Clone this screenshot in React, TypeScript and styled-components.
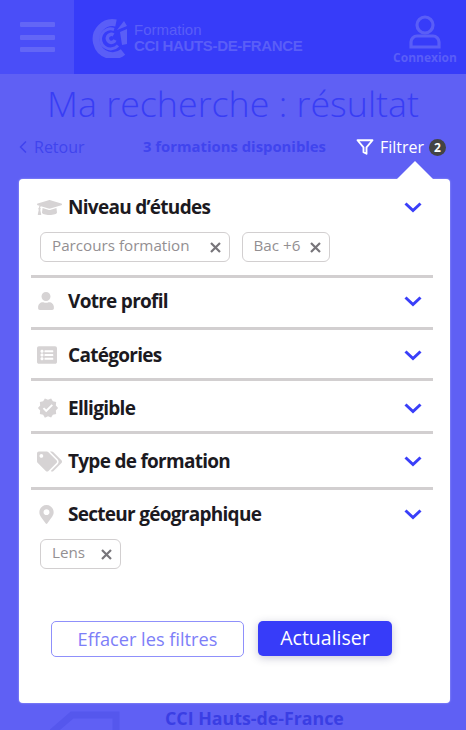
import React from 'react'
import styled, { createGlobalStyle } from 'styled-components'
import { FaGraduationCap, FaUser, FaListAlt, FaTags, FaMapMarkerAlt } from 'react-icons/fa'
import { MdVerified } from 'react-icons/md'
import { FiFilter, FiChevronLeft } from 'react-icons/fi'

const GlobalStyle = createGlobalStyle`
  html, body { margin: 0; padding: 0; }
  body { font-family: "Open Sans", "Noto Sans", sans-serif; background: #5f60f4; }
`

const Page = styled.div`
  position: relative;
  width: 466px;
  height: 730px;
  overflow: hidden;
  background: #5f60f4;
`

const Header = styled.header`
  display: flex;
  height: 74px;
  background: #373cf9;
`

const MenuButton = styled.div`
  width: 74px;
  display: flex;
  flex-direction: column;
  justify-content: center;
  align-items: center;
  gap: 7.5px;
  background: #4a4ef8;
`

const MenuLine = styled.span`
  width: 35px;
  height: 5px;
  border-radius: 1px;
  background: #6366f6;
`

const Brand = styled.div`
  display: flex;
  align-items: center;
  gap: 6px;
  padding: 2px 0 0 17px;
  flex: 1;
`

const BrandText = styled.div`
  display: flex;
  flex-direction: column;
  color: #5a5ef7;
  font-family: "Liberation Sans", sans-serif;
`

const BrandTop = styled.span`
  font-size: 15px;
  line-height: 15px;
  font-weight: 400;
`

const BrandBottom = styled.span`
  font-size: 15px;
  line-height: 17px;
  font-weight: 700;
  letter-spacing: -0.35px;
`

const Login = styled.div`
  width: 72px;
  display: flex;
  flex-direction: column;
  align-items: center;
  padding-top: 15px;
  margin-right: 5px;
  color: #5a5ef7;
  font-size: 12px;
  line-height: 17px;
  font-weight: 700;
`

const Title = styled.h1`
  margin: 0;
  padding-top: 5px;
  text-align: center;
  font-size: 35.8px;
  line-height: 48px;
  font-weight: 300;
  color: #383df5;
`

const ToolBar = styled.div`
  display: flex;
  align-items: center;
  height: 24px;
  margin-top: 8px;
  padding: 0 20px 0 13px;
  color: #4044ee;
  font-size: 16px;
`

const Back = styled.div`
  display: flex;
  align-items: center;
  width: 130px;
  gap: 1px;
`

const Count = styled.div`
  flex: 1;
  font-size: 14.85px;
  font-weight: 700;
  position: relative;
  top: -1px;
`

const FilterLink = styled.div`
  display: flex;
  align-items: center;
  gap: 6px;
  color: #fff;
`

const FilterBadge = styled.span`
  width: 17px;
  height: 17px;
  margin-left: -1px;
  border-radius: 50%;
  display: flex;
  align-items: center;
  justify-content: center;
  background: #444;
  font-size: 12px;
  font-weight: 700;
`

const Footer = styled.div`
  position: absolute;
  left: 165px;
  top: 706px;
  color: #3a3ee4;
  font-size: 17.8px;
  line-height: 24px;
  font-weight: 700;
`

const FooterMark = styled.svg`
  position: absolute;
  left: 50px;
  top: 710px;
`

const Panel = styled.div`
  position: absolute;
  left: 19px;
  top: 179px;
  width: 431px;
  height: 524px;
  box-sizing: border-box;
  padding: 0 17px 0 12px;
  background: #fff;
  border-radius: 4px;
  box-shadow: 0 0 2px rgba(255, 255, 255, 0.5);

  &::before {
    content: '';
    position: absolute;
    right: 16px;
    top: -18px;
    border-left: 19px solid transparent;
    border-right: 19px solid transparent;
    border-bottom: 19px solid #fff;
  }
`

const Section = styled.section<{ $top: number; $bottom: number; $last?: boolean }>`
  padding: ${(p) => p.$top}px 0 ${(p) => p.$bottom}px;
  border-bottom: ${(p) => (p.$last ? 'none' : '3px solid #d2cfd0')};
`

const SectionHead = styled.div`
  display: flex;
  align-items: center;
  height: 24px;
`

const IconSlot = styled.span`
  width: 37px;
  padding-left: 6px;
  box-sizing: border-box;
  display: flex;
  align-items: center;
  color: #d6d3d4;
`

const SectionTitle = styled.h2`
  flex: 1;
  margin: 0;
  font-size: 19px;
  line-height: 24px;
  font-weight: 700;
  letter-spacing: -0.72px;
  color: #1c1a1f;
`

const Chevron = styled.svg`
  margin-right: 11px;
  display: block;
`

const Chips = styled.div`
  display: flex;
  gap: 12px;
  margin-top: 13px;
  padding-left: 9px;
`

const Chip = styled.div<{ $gap: number }>`
  display: flex;
  align-items: center;
  gap: ${(p) => p.$gap}px;
  height: 30px;
  box-sizing: border-box;
  padding: 0 8px 0 11px;
  border: 1.5px solid #d2cfd0;
  border-radius: 6px;
  color: #938f92;
  font-size: 15.2px;
  line-height: 24px;
`

const ChipLabel = styled.span`
  position: relative;
  top: -2px;
`

const Actions = styled.div`
  position: absolute;
  left: 32px;
  top: 442px;
  display: flex;
  align-items: flex-start;
  gap: 14px;
`

const GhostButton = styled.button`
  width: 193px;
  height: 36px;
  border: 1.5px solid #8f90fb;
  border-radius: 5px;
  background: #fff;
  color: #7d7ef8;
  font: 400 18.2px "Open Sans", sans-serif;
  padding: 0;
`

const PrimaryButton = styled.button`
  width: 134px;
  height: 35px;
  border: none;
  border-radius: 5px;
  background: #373cf9;
  color: #fff;
  font: 500 19.5px "Open Sans", sans-serif;
  padding: 0 0 3px;
  box-shadow: 0 2px 8px rgba(40, 40, 90, 0.25);
`

const ChevronIcon = () => (
  <Chevron width="18" height="11" viewBox="0 0 18 11">
    <path d="M1.5 1.5 L9 8.5 L16.5 1.5" fill="none" stroke="#3a3ff9" strokeWidth="3" />
  </Chevron>
)

const CloseIcon = () => (
  <svg width="11" height="11" viewBox="0 0 11 11">
    <path d="M1 1 L10 10 M10 1 L1 10" stroke="#77757a" strokeWidth="2.2" />
  </svg>
)

const LogoMark = () => (
  <svg width="37" height="40" viewBox="0 0 37 40" fill="none" stroke="#5a5ef7">
    <path d="M32 34 A16.5 16.5 0 1 1 25 5" strokeWidth="7" />
    <path d="M27 27.5 A10 10 0 1 1 23 11.5" strokeWidth="3" />
    <path d="M24 22 A4 4 0 1 1 22.5 17" strokeWidth="3.5" />
    <path d="M26 12 L33 3 L36 8 Z" fill="#5a5ef7" stroke="none" />
    <path d="M29 14 L36 11 V26 L31 27 Z" fill="#5a5ef7" stroke="none" />
  </svg>
)

const UserIcon = () => (
  <svg width="32" height="34" viewBox="0 0 32 34" fill="none" stroke="#5a5ef7" strokeWidth="3.2">
    <circle cx="16" cy="10" r="8" />
    <path d="M8 21 H24 A6 6 0 0 1 30 27 V32 H2 V27 A6 6 0 0 1 8 21 Z" />
  </svg>
)

const App: React.FC = () => {
  return (
    <Page>
      <GlobalStyle />
      <Header>
        <MenuButton>
          <MenuLine />
          <MenuLine />
          <MenuLine />
        </MenuButton>
        <Brand>
          <LogoMark />
          <BrandText>
            <BrandTop>Formation</BrandTop>
            <BrandBottom>CCI HAUTS-DE-FRANCE</BrandBottom>
          </BrandText>
        </Brand>
        <Login>
          <UserIcon />
          <span>Connexion</span>
        </Login>
      </Header>
      <Title>Ma recherche : résultat</Title>
      <ToolBar>
        <Back>
          <FiChevronLeft size={20} />
          Retour
        </Back>
        <Count>3 formations disponibles</Count>
        <FilterLink>
          <FiFilter size={18} strokeWidth={2.5} />
          Filtrer
          <FilterBadge>2</FilterBadge>
        </FilterLink>
      </ToolBar>
      <FooterMark width="74" height="20" viewBox="0 0 74 20" fill="none" stroke="#5557ed" strokeWidth="7">
        <path d="M0 24 L22 5 H66 V24" />
      </FooterMark>
      <Footer>CCI Hauts-de-France</Footer>
      <Panel>
        <Section $top={16} $bottom={13}>
          <SectionHead>
            <IconSlot><FaGraduationCap size={25} /></IconSlot>
            <SectionTitle>Niveau d’études</SectionTitle>
            <ChevronIcon />
          </SectionHead>
          <Chips>
            <Chip $gap={20}>
              <ChipLabel>Parcours formation</ChipLabel>
              <CloseIcon />
            </Chip>
            <Chip $gap={10}>
              <ChipLabel>Bac +6</ChipLabel>
              <CloseIcon />
            </Chip>
          </Chips>
        </Section>
        <Section $top={11} $bottom={14}>
          <SectionHead>
            <IconSlot><FaUser size={18} /></IconSlot>
            <SectionTitle>Votre profil</SectionTitle>
            <ChevronIcon />
          </SectionHead>
        </Section>
        <Section $top={13} $bottom={11}>
          <SectionHead>
            <IconSlot><FaListAlt size={20} /></IconSlot>
            <SectionTitle>Catégories</SectionTitle>
            <ChevronIcon />
          </SectionHead>
        </Section>
        <Section $top={15} $bottom={11}>
          <SectionHead>
            <IconSlot><MdVerified size={22} /></IconSlot>
            <SectionTitle>Elligible</SectionTitle>
            <ChevronIcon />
          </SectionHead>
        </Section>
        <Section $top={15} $bottom={14}>
          <SectionHead>
            <IconSlot><FaTags size={25} /></IconSlot>
            <SectionTitle>Type de formation</SectionTitle>
            <ChevronIcon />
          </SectionHead>
        </Section>
        <Section $top={12} $bottom={0} $last>
          <SectionHead>
            <IconSlot><FaMapMarkerAlt size={19} /></IconSlot>
            <SectionTitle>Secteur géographique</SectionTitle>
            <ChevronIcon />
          </SectionHead>
          <Chips>
            <Chip $gap={16}>
              <ChipLabel>Lens</ChipLabel>
              <CloseIcon />
            </Chip>
          </Chips>
        </Section>
        <Actions>
          <GhostButton>Effacer les filtres</GhostButton>
          <PrimaryButton>Actualiser</PrimaryButton>
        </Actions>
      </Panel>
    </Page>
  )
}

export default App
